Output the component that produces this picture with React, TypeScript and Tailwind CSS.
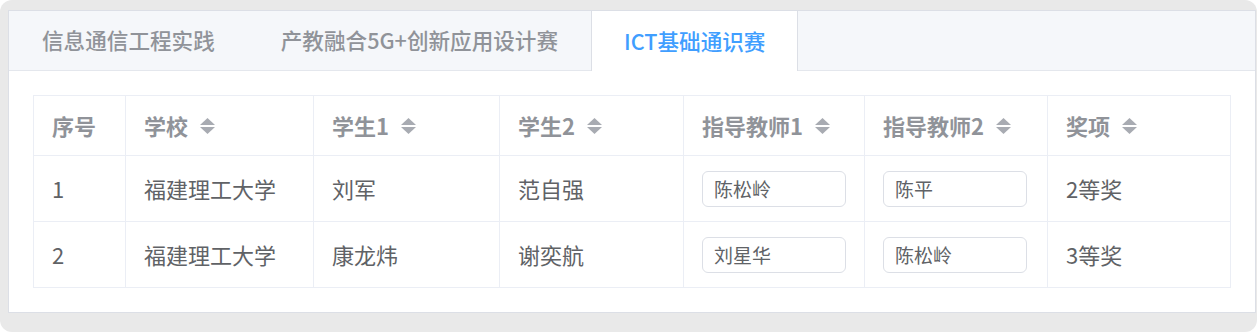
import React from "react";

const tabs = ["信息通信工程实践", "产教融合5G+创新应用设计赛", "ICT基础通识赛"];

const columns = ["序号", "学校", "学生1", "学生2", "指导教师1", "指导教师2", "奖项"];

const rows = [
  { no: "1", school: "福建理工大学", s1: "刘军", s2: "范自强", t1: "陈松岭", t2: "陈平", award: "2等奖" },
  { no: "2", school: "福建理工大学", s1: "康龙炜", s2: "谢奕航", t1: "刘星华", t2: "陈松岭", award: "3等奖" },
];

const grid = "grid grid-cols-[92px_188px_186px_184px_181px_183px_1fr]";

const SortCaret = () => (
  <svg width="15" height="16" viewBox="0 0 15 16" className="ml-3 shrink-0">
    <polygon points="7.5,0 15,7 0,7" fill="#a8abb2" />
    <polygon points="0,9 15,9 7.5,16" fill="#a8abb2" />
  </svg>
);

const Cell = ({ children, last }: { children: React.ReactNode; last?: boolean }) => (
  <div className={`flex items-center pl-[18px] ${last ? "" : "border-r border-[#ebeef5]"}`}>
    {children}
  </div>
);

const NameInput = ({ value }: { value: string }) => (
  <div className="flex h-[36px] w-[144px] items-center rounded-[6px] border border-[#dcdfe6] bg-white pl-[11px] pt-[2px] text-[19px] text-[#606266]">
    {value}
  </div>
);

export default function App() {
  const active = 2;
  return (
    <div
      className="h-[332px] w-full bg-white"
      style={{ fontFamily: '"Noto Sans CJK SC", "Noto Sans", sans-serif' }}
    >
      <div className="h-full rounded-xl bg-[#e9e9e9] pb-5 pl-2 pr-px pt-2.5">
        <div className="border border-[#dcdfe6] bg-white">
          {/* tab header */}
          <div className="flex h-[60px] items-start border-b border-[#e4e7ed] bg-[#f5f7fa]">
            {tabs.map((t, i) =>
              i === active ? (
                <div
                  key={t}
                  className="relative z-10 flex h-[60px] items-center border-x border-[#dcdfe6] bg-white px-[32px] text-[21.6px] font-medium text-[#409eff]"
                >
                  {t}
                </div>
              ) : (
                <div
                  key={t}
                  className="flex h-[59px] items-center px-[33px] text-[21.6px] font-medium text-[#909399]"
                >
                  {t}
                </div>
              )
            )}
          </div>

          {/* table */}
          <div className="p-6">
            <div className="border-x border-t border-[#ebeef5]">
              <div className={`${grid} h-[60px] border-b border-[#ebeef5] text-[22px] font-bold text-[#909399]`}>
                {columns.map((c, i) => (
                  <Cell key={c} last={i === columns.length - 1}>
                    {c}
                    {i > 0 && <SortCaret />}
                  </Cell>
                ))}
              </div>
              {rows.map((r) => (
                <div
                  key={r.no}
                  className={`${grid} h-[66px] border-b border-[#ebeef5] text-[22px] text-[#606266]`}
                >
                  <Cell>{r.no}</Cell>
                  <Cell>{r.school}</Cell>
                  <Cell>{r.s1}</Cell>
                  <Cell>{r.s2}</Cell>
                  <Cell>
                    <NameInput value={r.t1} />
                  </Cell>
                  <Cell>
                    <NameInput value={r.t2} />
                  </Cell>
                  <Cell last>{r.award}</Cell>
                </div>
              ))}
            </div>
          </div>
        </div>
      </div>
    </div>
  );
}
